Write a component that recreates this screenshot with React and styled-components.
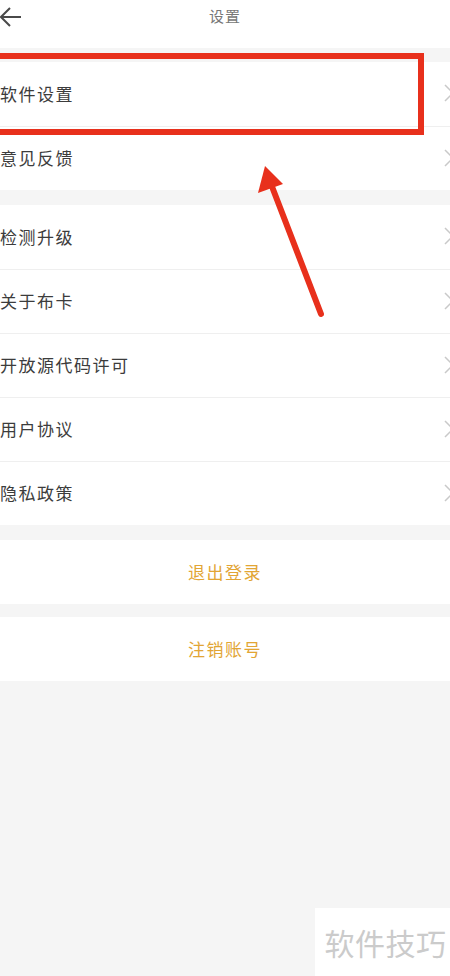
import React from 'react';
import styled, { createGlobalStyle } from 'styled-components';

const GlobalStyle = createGlobalStyle`
  html, body {
    margin: 0;
    padding: 0;
    background: #f5f5f5;
  }
  body {
    font-family: "Noto Sans CJK SC", "Noto Sans", sans-serif;
  }
`;

const Page = styled.div`
  position: relative;
  width: 450px;
  height: 976px;
  overflow: hidden;
  background: #f5f5f5;
`;

const Header = styled.div`
  height: 48px;
  background: #fff;
  display: flex;
  align-items: center;
  justify-content: center;
  position: relative;
`;

const BackBtn = styled.div`
  position: absolute;
  left: -1px;
  top: 6px;
  width: 24px;
  height: 22px;
  display: flex;
`;

const HeaderTitle = styled.div`
  font-size: 15px;
  color: #777;
  letter-spacing: 1px;
  margin-top: -17px;
`;

const Group = styled.div`
  background: #fff;
  margin-top: ${p => p.$gap}px;
`;

const Row = styled.div`
  box-sizing: border-box;
  height: 64px;
  display: flex;
  align-items: center;
  justify-content: ${p => (p.$center ? 'center' : 'space-between')};
  border-top: ${p => (p.$first ? 'none' : '1px solid #efefef')};
  padding-bottom: 2px;
`;

const Label = styled.span`
  font-size: 17px;
  letter-spacing: 1.5px;
  color: ${p => (p.$accent ? '#e2a535' : '#3c3c3c')};
`;

const Chevron = styled.svg`
  width: 10px;
  height: 18px;
  margin-right: -4px;
  flex: none;
`;

const Annotation = styled.svg`
  position: absolute;
  left: 0;
  top: 0;
  pointer-events: none;
`;

const Watermark = styled.div`
  position: absolute;
  right: 0;
  bottom: 0;
  width: 135px;
  height: 68px;
  background: #fff;
  display: flex;
  align-items: center;
  justify-content: center;
  font-size: 30px;
  color: #cbcbcb;
  letter-spacing: 0.5px;
  padding-left: 6px;
  box-sizing: border-box;
`;

const ChevronIcon = () => (
  <Chevron viewBox="0 0 10 18">
    <path d="M1 1 L9 9 L1 17" fill="none" stroke="#c9c9c9" strokeWidth="1.5" />
  </Chevron>
);

const groups = [
  { gap: 14, items: ['软件设置', '意见反馈'] },
  { gap: 15, items: ['检测升级', '关于布卡', '开放源代码许可', '用户协议', '隐私政策'] },
];

function App() {
  return (
    <Page>
      <GlobalStyle />
      <Header>
        <BackBtn>
          <svg width="24" height="22" viewBox="0 0 24 22">
            <path d="M22 11 H2 M11 2 L2 11 L11 20" fill="none" stroke="#4a4a4a" strokeWidth="2" />
          </svg>
        </BackBtn>
        <HeaderTitle>设置</HeaderTitle>
      </Header>

      {groups.map((g, gi) => (
        <Group key={gi} $gap={g.gap}>
          {g.items.map((item, i) => (
            <Row key={item} $first={i === 0}>
              <Label>{item}</Label>
              <ChevronIcon />
            </Row>
          ))}
        </Group>
      ))}

      <Group $gap={15}>
        <Row $first $center>
          <Label $accent>退出登录</Label>
        </Row>
      </Group>
      <Group $gap={13}>
        <Row $first $center>
          <Label $accent>注销账号</Label>
        </Row>
      </Group>

      <Annotation width="450" height="340" viewBox="0 0 450 340">
        <rect x="-10" y="56" width="431" height="76" fill="none" stroke="#e8301c" strokeWidth="6" />
        <line x1="321" y1="314" x2="271" y2="184" stroke="#e8301c" strokeWidth="6" strokeLinecap="round" />
        <polygon points="265,166 258,193 283,184" fill="#e8301c" />
      </Annotation>

      <Watermark>软件技巧</Watermark>
    </Page>
  );
}

export default App;
